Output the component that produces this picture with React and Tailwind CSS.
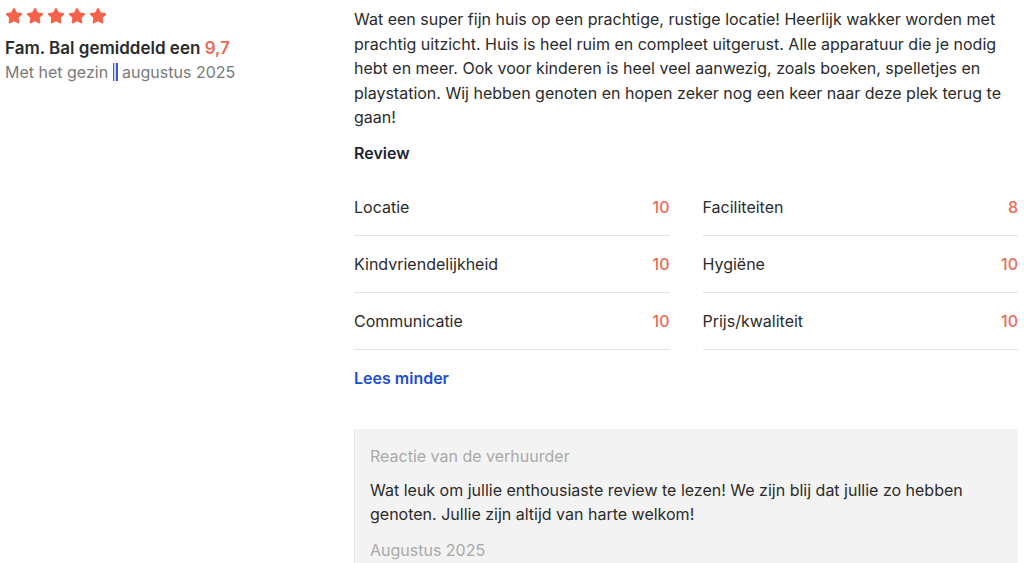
import { Star } from "lucide-react";

const scores = [
  { label: "Locatie", value: "10" },
  { label: "Faciliteiten", value: "8" },
  { label: "Kindvriendelijkheid", value: "10" },
  { label: "Hygiëne", value: "10" },
  { label: "Communicatie", value: "10" },
  { label: "Prijs/kwaliteit", value: "10" },
];

export default function App() {
  return (
    <div className="flex h-[563px] w-[1024px] overflow-hidden bg-white font-['Inter',sans-serif] text-[#2b2b2b]">
      {/* Left: author */}
      <div className="w-[354px] shrink-0 pl-[5px] pt-[7px]">
        <div className="flex gap-[3px]">
          {[0, 1, 2, 3, 4].map((i) => (
            <Star key={i} className="h-[18px] w-[18px] fill-[#f5614a] text-[#f5614a]" strokeWidth={1.5} />
          ))}
        </div>
        <div className="mt-[11px] text-[17px] font-semibold leading-6 text-[#2b2b2b]">
          Fam. Bal gemiddeld een <span className="text-[#ec6a55]">9,7</span>
        </div>
        <div className="text-[16px] leading-6 text-[#7a7a7a]">
          Met het gezin{" "}
          <span className="inline-block h-[18px] w-[5px] translate-y-[3px] bg-[#3b5cc4] align-baseline">
            <span className="ml-[1px] block h-full w-[2px] bg-[#c9d3f2]" />
          </span>{" "}
          augustus 2025
        </div>
      </div>

      {/* Right: review */}
      <div className="w-[664px] shrink-0 pt-[7px]">
        <p className="text-[16px] leading-[24.5px] text-[#2b2b2b]">
          Wat een super fijn huis op een prachtige, rustige locatie! Heerlijk wakker worden met prachtig uitzicht. Huis is heel ruim en compleet uitgerust. Alle apparatuur die je nodig hebt en meer. Ook voor kinderen is heel veel aanwezig, zoals boeken, spelletjes en playstation. Wij hebben genoten en hopen zeker nog een keer naar deze plek terug te gaan!
        </p>
        <h3 className="mt-[11px] text-[16px] font-semibold leading-6 text-[#1f2430]">Review</h3>
        <div className="mt-[14px] grid grid-cols-2 gap-x-[33px]">
          {scores.map((s) => (
            <div key={s.label} className="flex h-[57px] items-center justify-between border-b border-[#e3e3e3] pt-[1px]">
              <span className="text-[16px] text-[#2b2b2b]">{s.label}</span>
              <span className="text-[16px] font-medium text-[#ec6a55]">{s.value}</span>
            </div>
          ))}
        </div>
        <div className="mt-[16px] text-[16px] font-semibold leading-6 text-[#1d4ed0]">Lees minder</div>
        <div className="mt-[39px] border-l border-[#e2e2e2] bg-[#f3f3f3] pl-[15px] pr-4 pt-[15px] pb-4">
          <div className="text-[16px] leading-6 text-[#a9a9a9]">Reactie van de verhuurder</div>
          <p className="mt-[10px] text-[16px] leading-[24.5px] text-[#2b2b2b]">
            Wat leuk om jullie enthousiaste review te lezen! We zijn blij dat jullie zo hebben genoten. Jullie zijn altijd van harte welkom!
          </p>
          <div className="mt-[11px] text-[16px] leading-6 text-[#a9a9a9]">Augustus 2025</div>
        </div>
      </div>
    </div>
  );
}
